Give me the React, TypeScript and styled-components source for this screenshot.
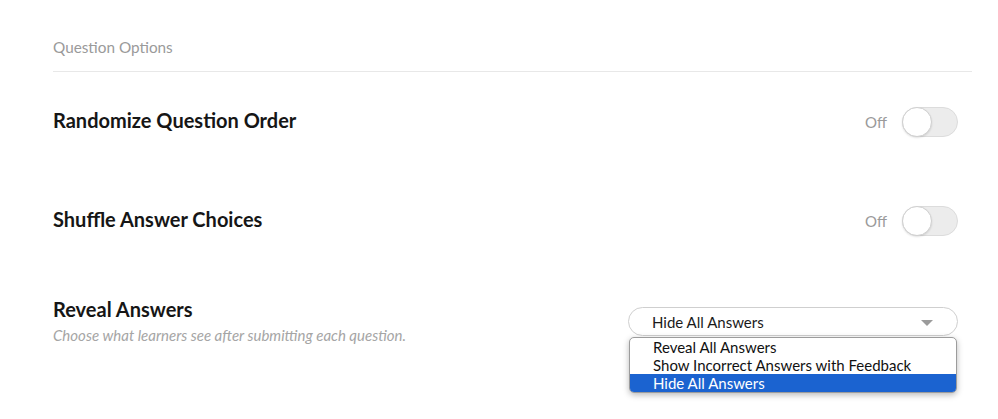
import React from "react";
import styled, { createGlobalStyle } from "styled-components";

const Global = createGlobalStyle`
  html, body { margin: 0; padding: 0; background: #fff; }
  body { font-family: Lato, "Open Sans", sans-serif; color: #1a1a1a; }
`;

const Page = styled.div`
  padding: 38px 26px 0 53px;
  width: 998px;
  height: 419px;
  box-sizing: border-box;
`;

const SectionHeader = styled.div`
  font-size: 15.3px;
  line-height: 18px;
  color: #9a9a9a;
  padding-bottom: 15px;
  border-bottom: 1px solid #e8e8e8;
`;

const Row = styled.div<{ $h: number }>`
  display: flex;
  align-items: center;
  justify-content: space-between;
  height: ${(p) => p.$h}px;
  padding-right: 14px;
`;

const TopRow = styled.div`
  display: flex;
  align-items: flex-start;
  justify-content: space-between;
  padding-top: 27px;
  padding-right: 14px;
`;

const Title = styled.div<{ $lift?: boolean }>`
  font-size: 20px;
  font-weight: 700;
  line-height: 24px;
  color: #161616;
  padding-bottom: ${(p) => (p.$lift ? 3 : 0)}px;
`;

const Subtitle = styled.div`
  font-size: 15px;
  font-style: italic;
  line-height: 18px;
  color: #a5a5a5;
  margin-top: 5px;
`;

const ToggleWrap = styled.div`
  display: flex;
  align-items: center;
  gap: 15px;
`;

const OffLabel = styled.span`
  font-size: 15px;
  color: #9a9a9a;
`;

const Track = styled.div`
  width: 56px;
  height: 30px;
  border-radius: 16px;
  background: #ececec;
  border: 1px solid #dcdcdc;
  box-sizing: border-box;
  display: flex;
  align-items: center;
`;

const Knob = styled.div`
  width: 30px;
  height: 30px;
  margin-left: -1px;
  border-radius: 50%;
  background: #fff;
  border: 1px solid #d0d0d0;
  box-sizing: border-box;
  box-shadow: 0 1px 2px rgba(0, 0, 0, 0.12);
`;

const SelectBox = styled.div`
  position: relative;
  margin-top: 10px;
`;

const SelectButton = styled.div`
  width: 330px;
  height: 29px;
  box-sizing: border-box;
  border: 1px solid #cfcfcf;
  border-radius: 15px;
  display: flex;
  align-items: center;
  justify-content: space-between;
  padding: 0 24px 0 23px;
  font-size: 15px;
  color: #1a1a1a;
  background: #fff;
`;

const Arrow = styled.span`
  width: 0;
  height: 0;
  border-left: 6px solid transparent;
  border-right: 6px solid transparent;
  border-top: 6px solid #9b9b9b;
  margin-top: 2px;
`;

const Menu = styled.div`
  position: absolute;
  left: 1px;
  top: 30px;
  width: 328px;
  box-sizing: border-box;
  border: 1px solid #9c9c9c;
  border-radius: 5px;
  background: #fff;
  box-shadow: 0 2px 6px rgba(0, 0, 0, 0.28);
  overflow: hidden;
`;

const Option = styled.div<{ $selected?: boolean }>`
  font-size: 15px;
  line-height: 18px;
  padding-left: 23px;
  color: ${(p) => (p.$selected ? "#fff" : "#111")};
  background: ${(p) => (p.$selected ? "#1b63d0" : "transparent")};
`;

const Toggle = () => (
  <ToggleWrap>
    <OffLabel>Off</OffLabel>
    <Track>
      <Knob />
    </Track>
  </ToggleWrap>
);

export default function App() {
  return (
    <>
      <Global />
      <Page>
        <SectionHeader>Question Options</SectionHeader>
        <Row $h={99}>
          <Title $lift>Randomize Question Order</Title>
          <Toggle />
        </Row>
        <Row $h={99}>
          <Title $lift>Shuffle Answer Choices</Title>
          <Toggle />
        </Row>
        <TopRow>
          <div>
            <Title>Reveal Answers</Title>
            <Subtitle>Choose what learners see after submitting each question.</Subtitle>
          </div>
          <SelectBox>
            <SelectButton>
              <span>Hide All Answers</span>
              <Arrow />
            </SelectButton>
            <Menu>
              <Option>Reveal All Answers</Option>
              <Option>Show Incorrect Answers with Feedback</Option>
              <Option $selected>Hide All Answers</Option>
            </Menu>
          </SelectBox>
        </TopRow>
      </Page>
    </>
  );
}
